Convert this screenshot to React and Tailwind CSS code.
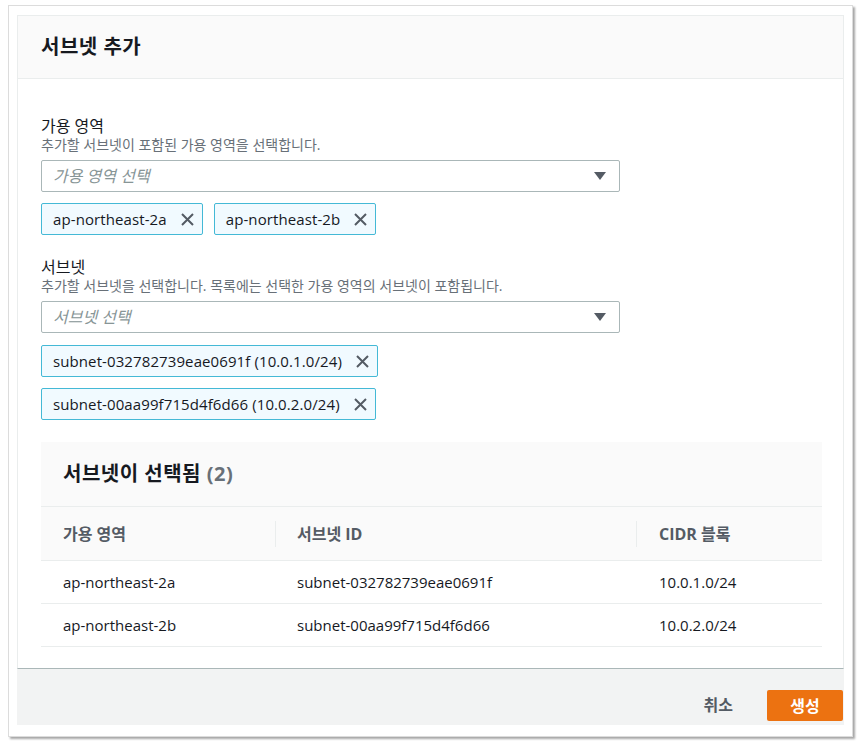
import React from "react";

const FONT = { fontFamily: '"Open Sans", "Noto Sans CJK KR", sans-serif' };

function XIcon() {
  return (
    <svg width="13" height="13" viewBox="0 0 13 13" className="shrink-0">
      <path d="M1 1 L12 12 M12 1 L1 12" stroke="#545b64" strokeWidth="2" fill="none" />
    </svg>
  );
}

function Caret() {
  return (
    <svg width="12" height="8" viewBox="0 0 12 8" className="shrink-0">
      <polygon points="0,0 12,0 6,8" fill="#545b64" />
    </svg>
  );
}

function Token({ children }) {
  return (
    <div className="h-[32px] flex items-center border border-[#44b9d6] bg-[#f1faff] rounded-[2px] pl-[11px] pr-[8px]">
      <span className="text-[15px] leading-[20px] tracking-[0.1px] text-[#16191f] whitespace-nowrap">{children}</span>
      <span className="ml-[14px] flex items-center">
        <XIcon />
      </span>
    </div>
  );
}

function Select({ placeholder }) {
  return (
    <div className="mt-[6px] h-[32px] w-[579px] border border-[#aab7b8] rounded-[2px] flex items-center justify-between pl-[11px] pr-[13px]">
      <span className="text-[16px] italic text-[#879596] leading-[20px]">{placeholder}</span>
      <Caret />
    </div>
  );
}

function Field({ label, desc }) {
  return (
    <>
      <div className="text-[16px] leading-[20px] text-[#16191f]">{label}</div>
      <div className="text-[14px] leading-[18px] text-[#687078]">{desc}</div>
    </>
  );
}

const rows = [
  ["ap-northeast-2a", "subnet-032782739eae0691f", "10.0.1.0/24"],
  ["ap-northeast-2b", "subnet-00aa99f715d4f6d66", "10.0.2.0/24"],
];

export default function App() {
  return (
    <div className="w-[863px] h-[746px] bg-white pl-[8px] pt-[5px]" style={FONT}>
      <div className="w-[845px] h-[732px] border border-[#dcdcdc] bg-white shadow-[2px_2px_2px_rgba(0,0,0,0.35)] pl-[8px] pt-[9px]">
        <div className="w-[827px] flex flex-col">
          {/* Header */}
          <div className="h-[64px] bg-[#fafafa] border border-[#eaeded] px-[23px] flex items-center">
            <span className="text-[20px] tracking-[0.5px] font-bold text-[#16191f] leading-[24px]">서브넷 추가</span>
          </div>

          {/* Body */}
          <div className="border-x border-b border-x-[#eaeded] border-b-[#aab7b8] pl-[23px] pr-[20px] pt-[37px] pb-[21px] bg-white">
            <Field label="가용 영역" desc="추가할 서브넷이 포함된 가용 영역을 선택합니다." />
            <Select placeholder="가용 영역 선택" />
            <div className="mt-[11px] w-[579px] flex flex-wrap gap-[11px]">
              <Token>ap-northeast-2a</Token>
              <Token>ap-northeast-2b</Token>
            </div>

            <div className="mt-[22px]">
              <Field
                label="서브넷"
                desc="추가할 서브넷을 선택합니다. 목록에는 선택한 가용 영역의 서브넷이 포함됩니다."
              />
            </div>
            <Select placeholder="서브넷 선택" />
            <div className="mt-[12px] w-[579px] flex flex-wrap gap-x-[11px] gap-y-[11px]">
              <Token>subnet-032782739eae0691f (10.0.1.0/24)</Token>
              <Token>subnet-00aa99f715d4f6d66 (10.0.2.0/24)</Token>
            </div>

            {/* Selected table */}
            <div className="mt-[22px] w-[781px]">
              <div className="h-[64px] bg-[#fafafa] pl-[22px] flex items-center">
                <span className="text-[20px] tracking-[0.5px] font-bold text-[#16191f] leading-[24px]">
                  서브넷이 선택됨 <span className="text-[#687078]">(2)</span>
                </span>
              </div>
              <div className="grid grid-cols-[234px_361px_186px] bg-[#fafafa] border-t border-b border-[#eaeded] h-[55px]">
                <div className="flex items-center pl-[22px] text-[16px] font-bold text-[#545b64]">가용 영역</div>
                <div className="flex items-center">
                  <div className="w-px h-[26px] bg-[#eaeded]" />
                  <span className="pl-[21px] text-[16px] font-bold text-[#545b64]">서브넷 ID</span>
                </div>
                <div className="flex items-center">
                  <div className="w-px h-[26px] bg-[#eaeded]" />
                  <span className="pl-[22px] text-[16px] font-bold text-[#545b64]">CIDR 블록</span>
                </div>
              </div>
              {rows.map((r, i) => (
                <div
                  key={i}
                  className="grid grid-cols-[234px_361px_186px] border-b border-[#eaeded] h-[43px] text-[15px] text-[#16191f]"
                >
                  <div className="flex items-center pl-[22px]">{r[0]}</div>
                  <div className="flex items-center pl-[22px]">{r[1]}</div>
                  <div className="flex items-center pl-[23px]">{r[2]}</div>
                </div>
              ))}
            </div>
          </div>

          {/* Footer */}
          <div className="h-[56px] bg-[#f2f3f3] flex justify-end items-start pt-[21px] pr-[1px]">
            <span className="mt-[5px] mr-[34px] text-[16px] font-bold text-[#545b64] leading-[20px]">취소</span>
            <div className="h-[31px] w-[76px] bg-[#ec7211] rounded-[2px] flex items-center justify-center text-[16px] font-bold text-white">
              생성
            </div>
          </div>
        </div>
      </div>
    </div>
  );
}
